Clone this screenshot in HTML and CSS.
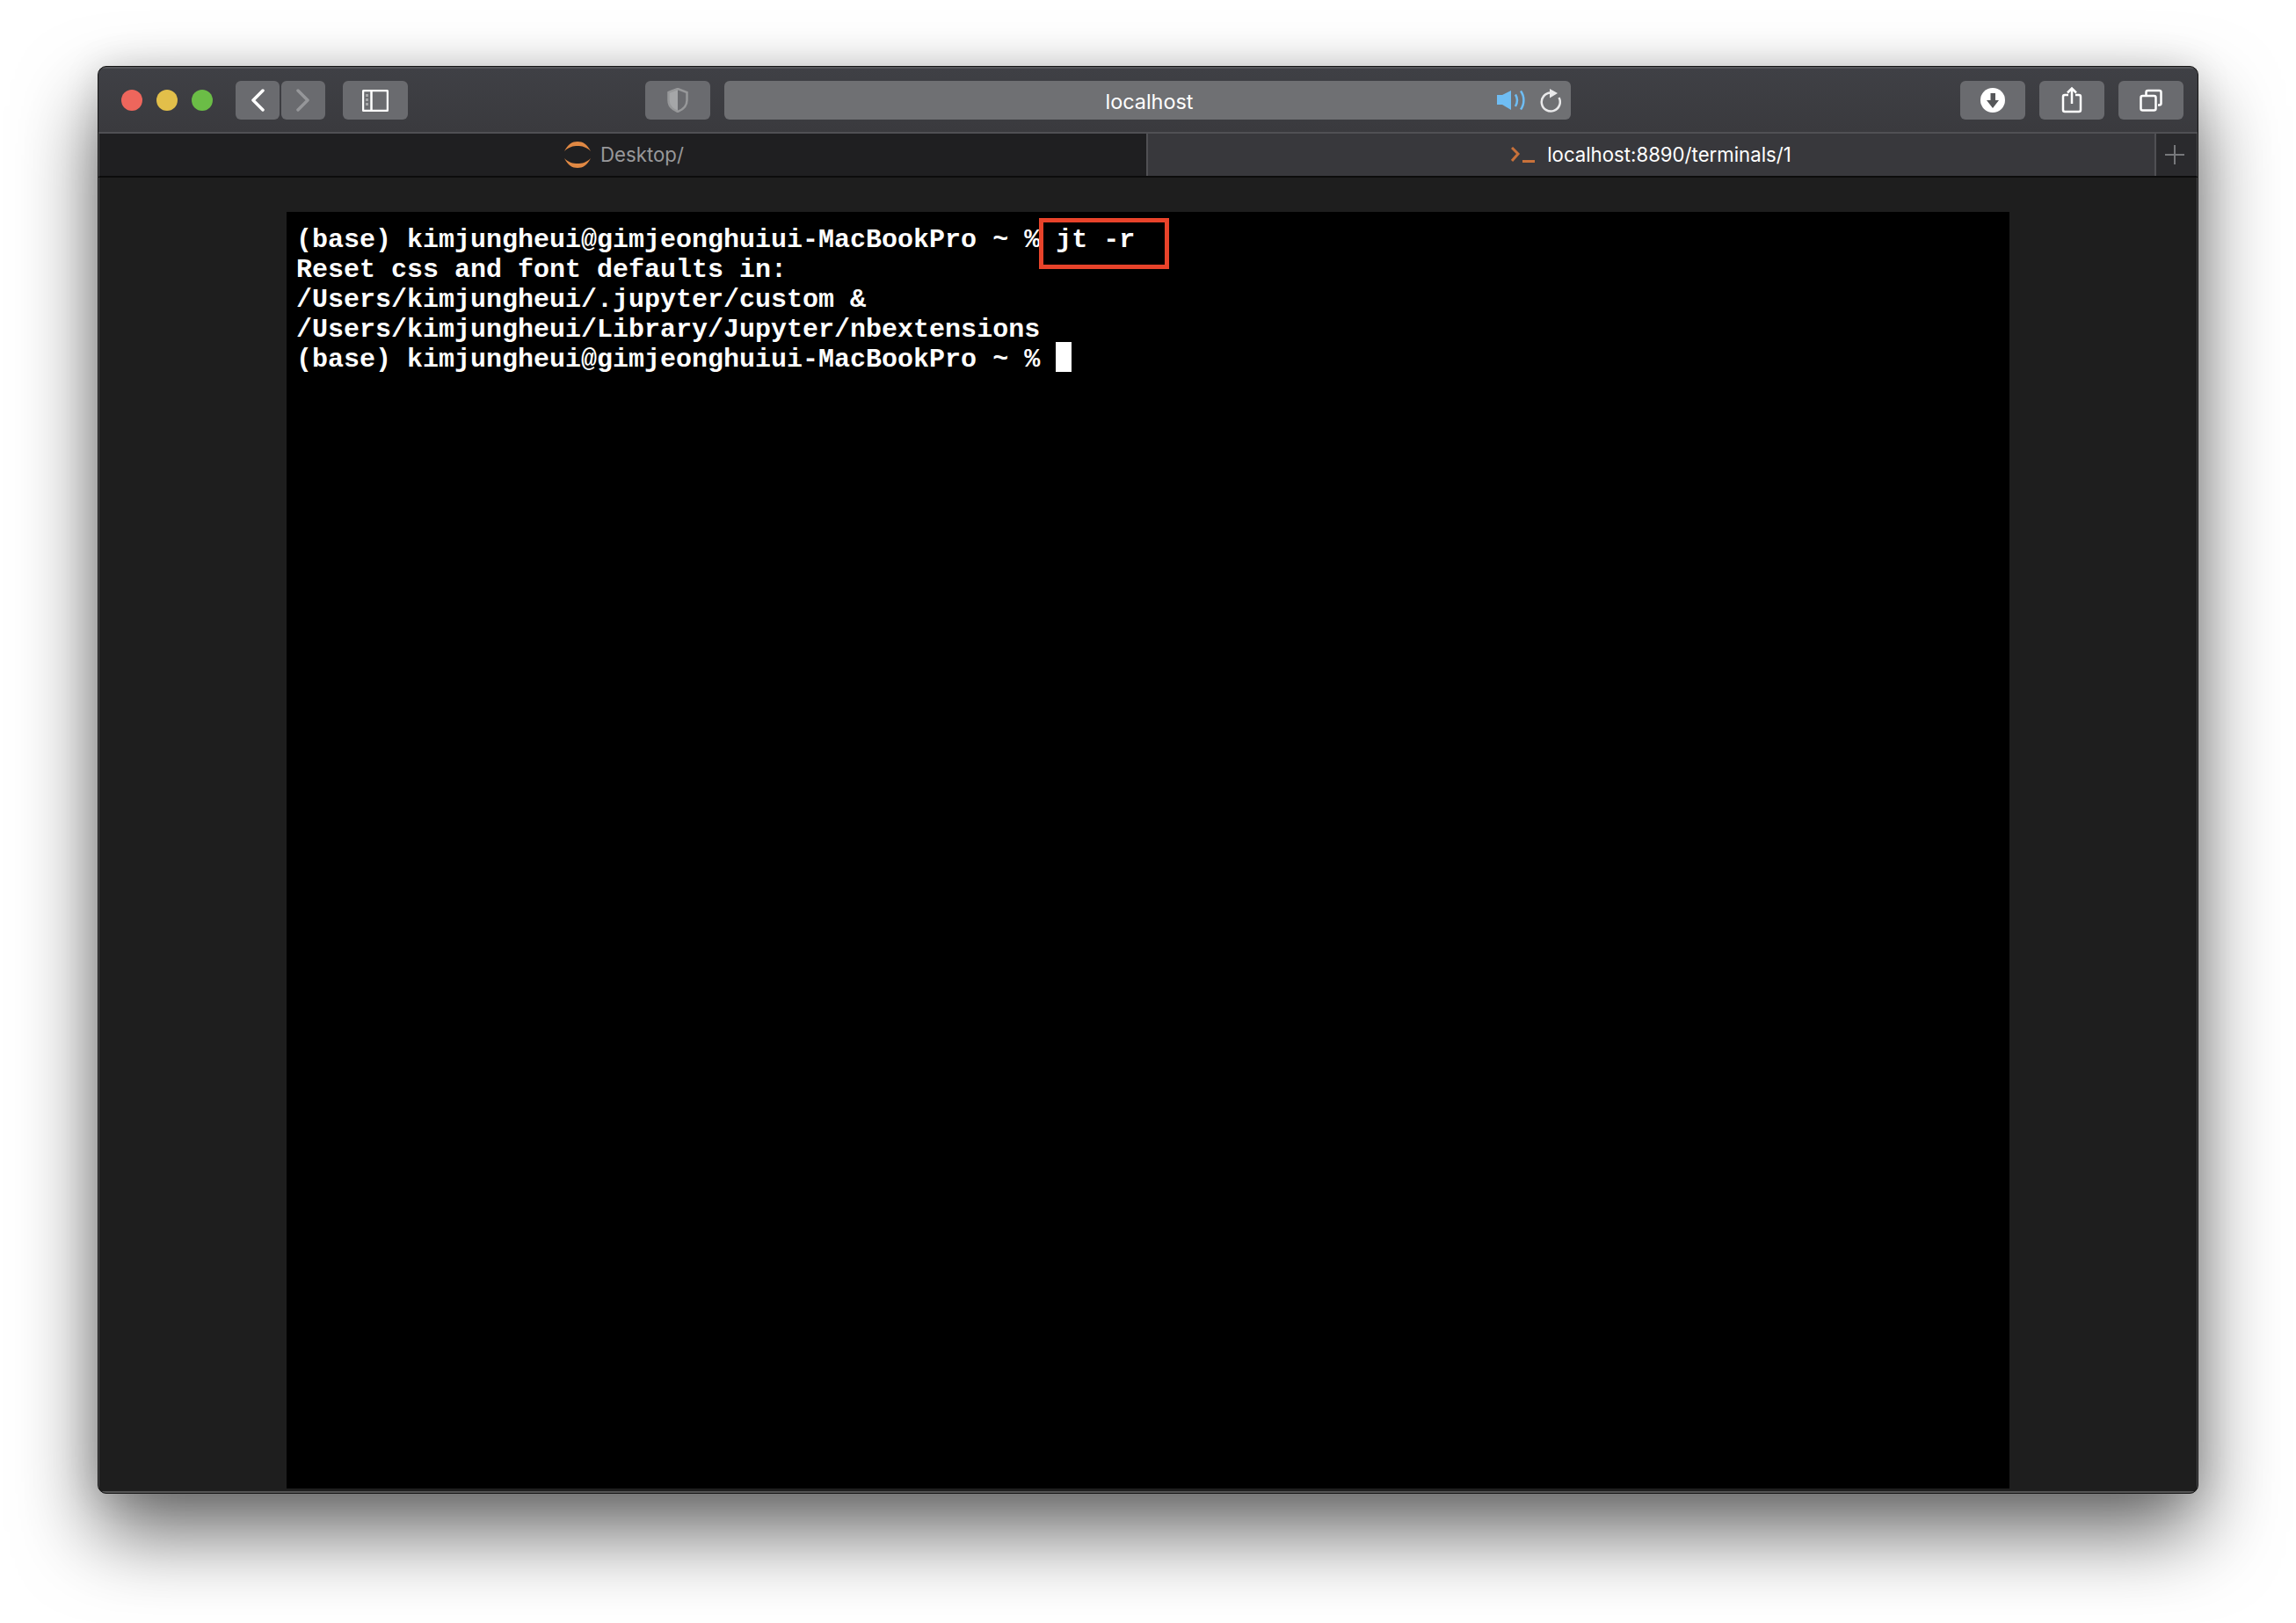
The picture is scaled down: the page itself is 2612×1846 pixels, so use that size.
FILE: index.html
```html
<!DOCTYPE html>
<html lang="en">
<head>
<meta charset="utf-8">
<title>localhost</title>
<link rel="stylesheet" href="styles.css">
</head>
<body>
<main class="window">
  <header class="toolbar">
    <div class="lights">
      <span class="light red"></span>
      <span class="light yellow"></span>
      <span class="light green"></span>
    </div>
    <div class="btn nav back">
      <svg width="16" height="26" viewBox="0 0 16 26"><path d="M14 2 3 13l11 11" class="st-white"/></svg>
    </div>
    <div class="btn nav forward">
      <svg width="16" height="26" viewBox="0 0 16 26"><path d="m2 2 11 11L2 24" class="st-dim"/></svg>
    </div>
    <div class="btn wide sidebar">
      <svg width="30" height="25" viewBox="0 0 30 25"><rect x="1" y="1" width="28" height="23" rx="1.5" class="st-thin"/><path d="M10.5 1v23" class="st-thin"/><path d="M4 5h3v3H4zM4 10h3v3H4zM4 15h3v3H4z" class="fill-dim"/></svg>
    </div>
    <div class="btn wide shield">
      <svg width="24" height="28" viewBox="0 0 24 28"><path d="M12 1 1.5 5v9c0 6 4 10.5 10.5 13V1z" class="fill-dim"/><path d="M12 1l10.5 4v9c0 6-4 10.5-10.5 13C5.500 24.500 1.500 20 1.500 14V5z" class="st-shield"/></svg>
    </div>
    <div class="url">
      <span></span>
      <span class="url-text">localhost</span>
      <div class="url-icons">
        <svg width="34" height="24" viewBox="0 0 34 24"><path d="M1 6h6L17 1v22L7 17H1z" class="fill-blue"/><path d="M22 5.500c2.500 4 2.500 9 0 13.500M28 1.500c4.500 6 4.500 15 0 21" class="st-blue"/></svg>
        <svg width="24" height="27" viewBox="0 0 24 27"><path d="M12 4.500A10.500 10.500 0 1 0 21.500 10" class="st-reload"/><path d="M11 0l9 5-9 5.500z" class="fill-reload"/></svg>
      </div>
    </div>
    <div class="btn wide download">
      <svg width="28" height="28" viewBox="0 0 28 28"><circle cx="14" cy="14" r="14" class="fill-white"/><path d="M11.500 6h5.500v8H21l-7 9-7-9h4.500z" class="fill-btn"/></svg>
    </div>
    <div class="btn wide share">
      <svg width="24" height="32" viewBox="0 0 24 32"><path d="M8 10H4a2 2 0 0 0-2 2v15a2 2 0 0 0 2 2h16a2 2 0 0 0 2-2V12a2 2 0 0 0-2-2h-4M12 20V2.500M7 7.500l5-5 5 5" class="st-thin"/></svg>
    </div>
    <div class="btn wide tabs">
      <svg width="26" height="26" viewBox="0 0 26 26"><rect x="1.500" y="8" width="17" height="16.500" rx="2" class="st-thin"/><path d="M7.500 7V4a2 2 0 0 1 2-2h13a2 2 0 0 1 2 2v12.500a2 2 0 0 1-2 2H21" class="st-thin"/></svg>
    </div>
  </header>
  <nav class="tabbar">
    <div class="tab inactive">
      <svg width="32" height="30" viewBox="0 0 32 30"><path d="M1 11C5 3 10 0 16 0s11 3 15 11C26 6 21 5 16 5S6 6 1 11zM1 19c5 5 10 6 15 6s10-1 15-6c-4 8-9 11-15 11S5 27 1 19z" class="fill-orange"/></svg>
      <span class="tab-label">Desktop/</span>
    </div>
    <div class="tab active">
      <svg width="27" height="18" viewBox="0 0 27 18"><path d="M1 1l7 7-7 8" class="st-orange"/><path d="M13 16.500h14" class="st-orange"/></svg>
      <span class="tab-label">localhost:8890/terminals/1</span>
    </div>
    <div class="new-tab">
      <svg width="22" height="22" viewBox="0 0 22 22"><path d="M11 0v22M0 11h22" class="st-plus"/></svg>
    </div>
  </nav>
  <section class="content">
    <div class="terminal">
      <div class="line">(base) kimjungheui@gimjeonghuiui-MacBookPro ~ % <span class="marked">jt -r</span></div>
      <div class="line">Reset css and font defaults in:</div>
      <div class="line">/Users/kimjungheui/.jupyter/custom &amp;</div>
      <div class="line">/Users/kimjungheui/Library/Jupyter/nbextensions</div>
      <div class="line">(base) kimjungheui@gimjeonghuiui-MacBookPro ~ % <span class="cursor"></span></div>
    </div>
  </section>
</main>
</body>
</html>
```
FILE: styles.css
```css
*, *::before { box-sizing: border-box; }
html, body { margin: 0; background: #fff; }
body { padding: 75px 0 0 111px; height: 1846px; overflow: hidden; }

.window {
  width: 2390px;
  height: 1624px;
  display: flex;
  flex-direction: column;
  border-radius: 10px;
  overflow: hidden;
  background: #1e1e1e;
  border: 1px solid #151515;
  box-shadow: 0 44px 90px rgba(0,0,0,.6), 0 0 40px rgba(0,0,0,.12);
}

.toolbar {
  height: 76px;
  flex: none;
  display: flex;
  align-items: center;
  padding: 0 0 0 26px;
  background: linear-gradient(#3f4045, #3a3a3e);
  border-top: 2px solid #55565a;
  border-bottom: 2px solid #505054;
}
.lights { display: flex; gap: 16px; margin-right: 26px; }
.light { width: 24px; height: 24px; border-radius: 50%; }
.red { background: #ee665c; }
.yellow { background: #e2bf4a; }
.green { background: #6bbd46; }

.btn {
  height: 44px;
  display: flex;
  align-items: center;
  justify-content: center;
  background: #6a6b6f;
  border-radius: 6px;
}
.nav { width: 50px; }
.forward { margin-left: 2px; }
.wide { width: 74px; }
.sidebar { margin-left: 20px; }
.shield { margin-left: 270px; }
.url {
  width: 963px;
  height: 44px;
  margin-left: 16px;
  display: grid;
  grid-template-columns: 1fr auto 1fr;
  align-items: center;
  background: #6f7073;
  border-radius: 6px;
}
.url-text { font: 400 23.400px "Inter", sans-serif; color: #fff; padding: 2px 0 0 4px; }
.url-icons { display: flex; justify-content: flex-end; align-items: center; gap: 16px; padding-right: 11px; }
.download { margin-left: 443px; }
.share { margin-left: 16px; }
.tabs { margin-left: 16px; }

.tabbar {
  height: 50px;
  flex: none;
  display: flex;
  background: #1f1f21;
  border-left: 1px solid #4c4c4e;
  border-right: 1px solid #4c4c4e;
  border-bottom: 2px solid #0c0c0c;
}
.tab {
  display: flex;
  align-items: center;
  justify-content: center;
  font: 400 22.200px "Inter", sans-serif;
}
.tab-label { padding-bottom: 2px; }
.inactive { width: 1191px; padding-left: 2px; gap: 10px; color: #98989a; }
.active {
  width: 1147px;
  gap: 14px;
  color: #fff;
  background: #38383c;
  border-left: 2px solid #505054;
}
.new-tab {
  flex: 1;
  display: flex;
  align-items: center;
  justify-content: center;
  padding-right: 4px;
  background: #2a2a2d;
  border-left: 2px solid #505054;
}

.content {
  flex: 1;
  min-height: 0;
  padding: 39px 213px 3px;
  background: #1e1e1e;
  border-left: 1px solid #4c4c4e;
  border-right: 1px solid #4c4c4e;
  border-bottom: 2px solid #555;
}
.terminal {
  height: 100%;
  padding: 12px 11px;
  background: #000;
  color: #fff;
  font: 700 30px/40px "Liberation Mono", monospace;
}
.line { height: 34px; white-space: pre; }
.marked { position: relative; }
.marked::before {
  content: "";
  position: absolute;
  left: -19px;
  top: -8px;
  width: 148px;
  height: 58px;
  border: 5px solid #e8432a;
}
.cursor { display: inline-block; width: 18px; height: 34px; background: #fff; vertical-align: top; }

svg { display: block; flex: none; }
.st-white { fill: none; stroke: #fff; stroke-width: 3.500; stroke-linecap: round; stroke-linejoin: round; }
.st-dim { fill: none; stroke: #96979a; stroke-width: 3.500; stroke-linecap: round; stroke-linejoin: round; }
.st-thin { fill: none; stroke: #fff; stroke-width: 2.500; }
.fill-dim { fill: #a5a6a8; }
.st-shield { fill: none; stroke: #97989a; stroke-width: 2.500; }
.fill-blue { fill: #6fbdf3; }
.st-blue { fill: none; stroke: #6fbdf3; stroke-width: 2.500; }
.st-reload { fill: none; stroke: #e9e9ea; stroke-width: 2.500; }
.fill-reload { fill: #e9e9ea; }
.fill-white { fill: #fff; }
.fill-btn { fill: #555659; }
.fill-orange { fill: #e08843; }
.st-orange { fill: none; stroke: #c8713a; stroke-width: 3; }
.st-plus { fill: none; stroke: #77787b; stroke-width: 2; }
```
